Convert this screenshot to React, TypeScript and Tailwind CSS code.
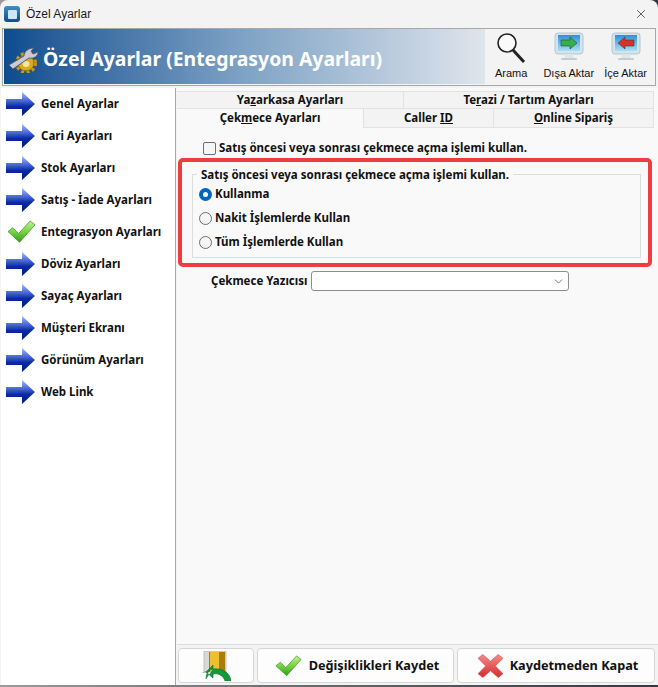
import type { ReactNode } from "react";
import { X, ChevronDown } from "lucide-react";

const UI_FONT = "font-['Noto_Sans','DejaVu_Sans',sans-serif]";

const MENU_ITEMS = [
  { label: "Genel Ayarlar" },
  { label: "Cari Ayarları" },
  { label: "Stok Ayarları" },
  { label: "Satış - İade Ayarları" },
  { label: "Entegrasyon Ayarları", active: true },
  { label: "Döviz Ayarları" },
  { label: "Sayaç Ayarları" },
  { label: "Müşteri Ekranı" },
  { label: "Görünüm Ayarları" },
  { label: "Web Link" },
];

function ArrowIcon() {
  return (
    <svg width="30" height="24" viewBox="0 0 30 24">
      <defs>
        <linearGradient id="arrowFill" x1="0" y1="0" x2="0" y2="1">
          <stop offset="0" stopColor="#a9bcf0" />
          <stop offset="0.35" stopColor="#4a6cd6" />
          <stop offset="0.6" stopColor="#0c2aa6" />
          <stop offset="1" stopColor="#06157c" />
        </linearGradient>
      </defs>
      <path d="M0 7h16V0l13 12-13 12v-7H0z" fill="url(#arrowFill)" />
    </svg>
  );
}

function CheckIcon({ size = 29 }: { size?: number }) {
  return (
    <svg width={size} height={(size * 24) / 30} viewBox="0 0 30 24">
      <defs>
        <linearGradient id="checkFill" x1="0" y1="0" x2="0" y2="1">
          <stop offset="0" stopColor="#c4f09a" />
          <stop offset="0.5" stopColor="#78d440" />
          <stop offset="1" stopColor="#2f9a17" />
        </linearGradient>
      </defs>
      <path
        d="M1 12l5-4 6 6L24 1l5 4-16 18z"
        fill="url(#checkFill)"
        stroke="#3f9a2a"
        strokeWidth="0.8"
      />
    </svg>
  );
}

function CrossIcon() {
  return (
    <svg width="25" height="24" viewBox="0 0 26 24">
      <defs>
        <linearGradient id="crossFill" x1="0" y1="0" x2="0" y2="1">
          <stop offset="0" stopColor="#f58a8a" />
          <stop offset="1" stopColor="#d42b2b" />
        </linearGradient>
      </defs>
      <path
        d="M5 0l8 7 8-7 5 4-8 8 8 8-5 4-8-7-8 7-5-4 8-8-8-8z"
        fill="url(#crossFill)"
        stroke="#c64a4a"
        strokeWidth="0.6"
      />
    </svg>
  );
}

function GearIcon() {
  return (
    <svg width="30" height="27" viewBox="0 0 30 27">
      <circle cx="17" cy="17" r="8" fill="#d9ac20" stroke="#8a6a10" strokeWidth="1" />
      <circle
        cx="17"
        cy="17"
        r="9.5"
        fill="none"
        stroke="#c99a18"
        strokeWidth="3"
        strokeDasharray="3 2.6"
      />
      <ellipse cx="17" cy="18" rx="3.5" ry="3" fill="#f7e597" />
      <path
        d="M0 19l15-9c0-4 4-8 10-8l-3 3 2 3 5-2c0 4-4 7-9 6L4 23z"
        fill="#c9ccd2"
        stroke="#5c6068"
        strokeWidth="1"
      />
    </svg>
  );
}

function MonitorIcon({ color, flip }: { color: string; flip?: boolean }) {
  return (
    <svg width="30" height="30" viewBox="0 0 30 30">
      <defs>
        <linearGradient id="screenFill" x1="0" y1="0" x2="0" y2="1">
          <stop offset="0" stopColor="#2f8fd8" />
          <stop offset="1" stopColor="#a8e0f5" />
        </linearGradient>
      </defs>
      <rect x="1" y="1" width="28" height="21" rx="3" fill="#d5e4ea" stroke="#b4c6cf" />
      <rect x="4" y="3" width="22" height="16" fill="url(#screenFill)" />
      <path d="M11 22h8l1 4h-10z" fill="#dfe5e8" />
      <rect x="7" y="26" width="16" height="2" rx="1" fill="#c3ccd1" />
      <path
        d={flip ? "M7 11l7-6v3h9v6h-9v3z" : "M23 11l-7-6v3H7v6h9v3z"}
        fill={color}
        stroke="#33443a"
        strokeWidth="0.6"
      />
    </svg>
  );
}

function DoorIcon() {
  return (
    <svg width="30" height="30" viewBox="0 0 30 30">
      <rect x="3" y="0" width="22" height="21" fill="#d7d9d6" stroke="#a3a8a5" strokeWidth="0.6" />
      <rect x="8" y="1" width="16" height="20" fill="#a97c0c" />
      <path d="M9 1h9v20H9z" fill="#ecc02f" />
      <path d="M0 22l8-1v-2z" fill="#8f9694" />
      <path
        d="M5 28c0-6 3-9 7-10v-4l-7 7 7 6v-4c5-1 10 1 12 7h6c-1-8-8-13-18-12"
        fill="#159a3a"
        stroke="#0c6a28"
        strokeWidth="0.6"
      />
    </svg>
  );
}

function Tab({
  children,
  className,
}: {
  children: ReactNode;
  className: string;
}) {
  return (
    <div
      className={`flex items-center justify-center border-r border-b border-[#e2e2e2] text-[11.5px] font-bold text-[#111] ${className}`}
    >
      {children}
    </div>
  );
}

function Radio({ label, checked }: { label: string; checked?: boolean }) {
  return (
    <div className="flex h-6 items-center gap-[3px]">
      {checked ? (
        <span className="flex h-[13px] w-[13px] items-center justify-center rounded-full bg-[#0067c0]">
          <span className="h-[5px] w-[5px] rounded-full bg-white" />
        </span>
      ) : (
        <span className="h-[13px] w-[13px] rounded-full border border-[#6e6e6e] bg-[#f5f5f5]" />
      )}
      <span className="text-[11.5px] font-bold text-[#111]">{label}</span>
    </div>
  );
}

function FooterButton({
  children,
  className,
}: {
  children: ReactNode;
  className: string;
}) {
  return (
    <div
      className={`flex h-[35px] items-center justify-center rounded-[4px] border border-[#d6d6d6] bg-[#fdfdfd] ${className}`}
    >
      {children}
    </div>
  );
}

export default function App() {
  return (
    <div
      className={`h-[687px] w-[658px] overflow-hidden bg-gradient-to-r from-[#9a9a9a] to-[#33383f] ${UI_FONT}`}
    >
      <div className="flex h-[685px] flex-col overflow-hidden rounded-t-lg bg-[#f3f3f3]">
        {/* Titlebar */}
        <div className="flex h-[28px] shrink-0 items-center pl-1 pr-[10px]">
          <div className="flex h-4 w-4 items-center justify-center rounded-[3px] bg-gradient-to-b from-[#3f8fc4] to-[#0f4f86]">
            <div className="h-[9px] w-[9px] rounded-[1px] bg-[#cfe6f5]" />
          </div>
          <span className="ml-[6px] font-['Liberation_Sans',sans-serif] text-[12px] text-[#1a1a1a]">
            Özel Ayarlar
          </span>
          <X className="ml-auto h-[14px] w-[14px] text-[#222]" strokeWidth={1.2} />
        </div>

        {/* Banner */}
        <div className="mx-[2px] flex h-[58px] shrink-0 border border-[#a8a8a8] pb-px pl-px">
          <div className="flex w-[481px] items-center bg-gradient-to-r from-[#0b4c8e] via-[#7fa3c5] to-[#dfe5ec] pt-[5px] pl-[5px]">
            <GearIcon />
            <span className="ml-[4px] text-[19.4px] font-bold whitespace-nowrap text-white">
              Özel Ayarlar (Entegrasyon Ayarları)
            </span>
          </div>
          <div className="flex flex-1 items-end pb-[3px] pl-[10px] font-['Liberation_Sans',sans-serif] text-[11px] text-[#111]">
            <div className="flex flex-col items-center">
              <svg width="30" height="32" viewBox="0 0 30 32">
                <circle cx="11" cy="11" r="9" fill="#fafafa" stroke="#222" strokeWidth="1.6" />
                <path d="M17 18l11 12" stroke="#222" strokeWidth="3" />
              </svg>
              <span className="mt-[1px]">Arama</span>
            </div>
            <div className="ml-[16px] flex flex-col items-center">
              <MonitorIcon color="#36b04a" />
              <span className="mt-[3px]">Dışa Aktar</span>
            </div>
            <div className="ml-[10px] flex flex-col items-center">
              <MonitorIcon color="#d8302c" flip />
              <span className="mt-[3px]">İçe Aktar</span>
            </div>
          </div>
        </div>

        {/* Body */}
        <div className="mt-[2px] flex min-h-0 flex-1">
          <div className="ml-px flex w-[175px] shrink-0 flex-col border-r border-[#a8a8a8] bg-white pl-[5px]">
            {MENU_ITEMS.map((item) => (
              <div key={item.label} className="flex h-8 items-center gap-[5px]">
                <span className="flex w-[30px] justify-center">
                  {item.active ? <CheckIcon /> : <ArrowIcon />}
                </span>
                <span className="text-[11.5px] font-bold whitespace-nowrap text-[#111]">
                  {item.label}
                </span>
              </div>
            ))}
          </div>

          <div className="flex min-w-0 flex-1 flex-col pl-[1px]">
            {/* Tabs and panel */}
            <div className="flex flex-1 flex-col border-b border-[#dcdcdc] bg-[#f9f9f9] pt-[3px] pr-[4px]">
              <div className="flex h-[18px] bg-[#f3f3f3]">
                <Tab className="w-[227px] border-t">
                  <span>
                    Ya<u>z</u>arkasa Ayarları
                  </span>
                </Tab>
                <Tab className="flex-1 border-t">
                  <span>
                    Te<u>r</u>azi / Tartım Ayarları
                  </span>
                </Tab>
              </div>
              <div className="flex h-[19px] bg-[#f3f3f3]">
                <div className="flex w-[187px] items-start justify-center border-r border-[#e2e2e2] bg-[#f9f9f9] text-[11.5px] font-bold text-[#111]">
                  <span>
                    Çek<u>m</u>ece Ayarları
                  </span>
                </div>
                <Tab className="w-[130px]">
                  <span>
                    Caller <u>ID</u>
                  </span>
                </Tab>
                <Tab className="flex-1">
                  <span>
                    <u>O</u>nline Sipariş
                  </span>
                </Tab>
              </div>

              <div className="mt-[12px] flex h-4 items-center pl-[26px]">
                <span className="h-[13px] w-[13px] rounded-[2px] border border-[#6e6e6e] bg-[#f5f5f5]" />
                <span className="ml-[3px] text-[11.5px] font-bold text-[#111]">
                  Satış öncesi veya sonrası çekmece açma işlemi kullan.
                </span>
              </div>

              <div className="mt-[2px] mr-[2px] ml-[1px] h-[109px] rounded-[5px] border-4 border-[#ee3c3f] pt-[12px] pr-[7px] pl-[10px]">
                <div className="relative h-[84px] border border-[#dcdcdc] pt-[7px] pl-[6px]">
                  <span className="absolute -top-[8px] left-[4px] bg-[#f9f9f9] px-[4px] text-[11.5px] leading-4 font-bold whitespace-nowrap text-[#111]">
                    Satış öncesi veya sonrası çekmece açma işlemi kullan.
                  </span>
                  <Radio label="Kullanma" checked />
                  <Radio label="Nakit İşlemlerde Kullan" />
                  <Radio label="Tüm İşlemlerde Kullan" />
                </div>
              </div>

              <div className="mt-[4px] flex items-center pl-[34px]">
                <span className="w-[100px] text-[11.5px] font-bold whitespace-nowrap text-[#111]">
                  Çekmece Yazıcısı
                </span>
                <div className="flex h-[20px] w-[258px] items-center justify-end rounded-[3px] border border-[#8d8d8d] bg-white pr-[3px]">
                  <ChevronDown className="h-[13px] w-[13px] text-[#444]" strokeWidth={1.3} />
                </div>
              </div>
            </div>

            {/* Footer */}
            <div className="flex h-[40px] shrink-0 items-start gap-[3px] pt-[3px] pr-[3px] pl-px">
              <FooterButton className="w-[76px]">
                <DoorIcon />
              </FooterButton>
              <FooterButton className="w-[197px] gap-[7px] pl-[3px]">
                <CheckIcon size={27} />
                <span className="text-[12.7px] font-bold whitespace-nowrap text-[#111]">
                  Değişiklikleri Kaydet
                </span>
              </FooterButton>
              <FooterButton className="flex-1 gap-[7px] pl-[4px]">
                <CrossIcon />
                <span className="text-[12.7px] font-bold whitespace-nowrap text-[#111]">
                  Kaydetmeden Kapat
                </span>
              </FooterButton>
            </div>
          </div>
        </div>
      </div>
    </div>
  );
}
